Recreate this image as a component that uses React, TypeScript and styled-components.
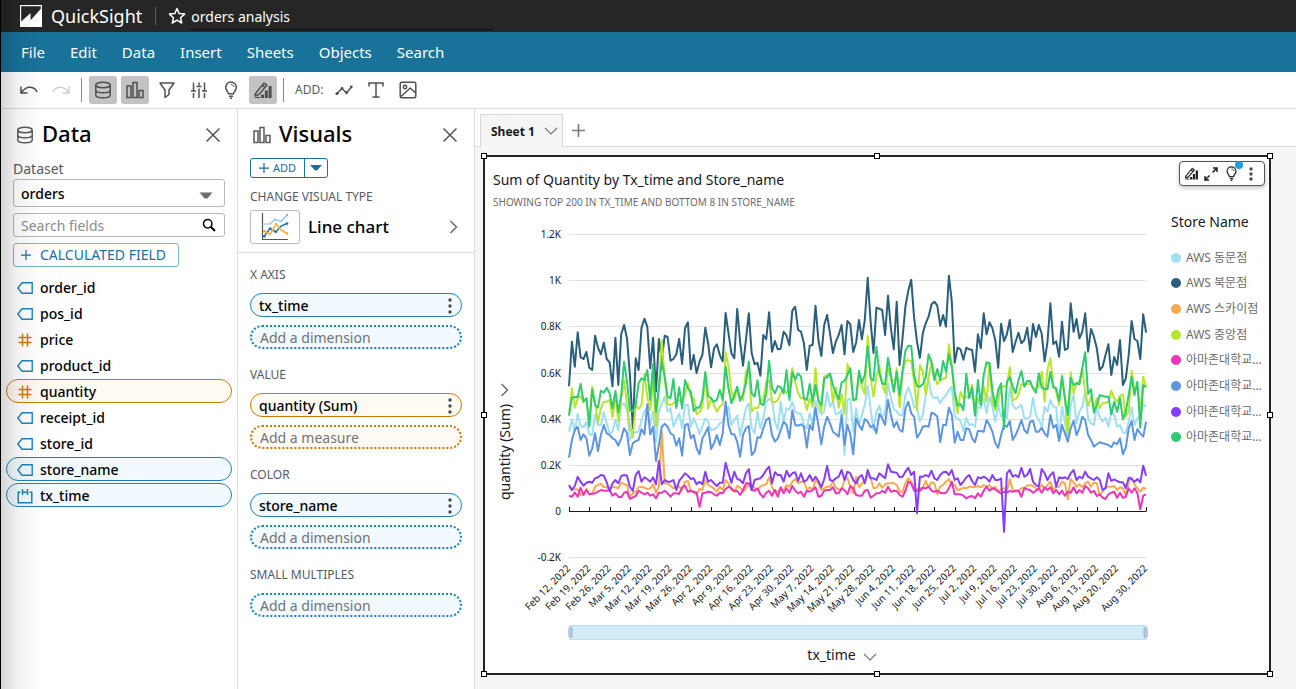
import React from "react";
import styled, { createGlobalStyle } from "styled-components";

const FONT = '"Noto Sans", "Noto Sans CJK KR", sans-serif';
const BLUE = "#1f82bd";
const TEAL = "#187299";
const AMBER = "#cc7a0a";

const GlobalStyle = createGlobalStyle`
  *, *::before, *::after { box-sizing: border-box; }
  body { margin: 0; background: #f5f5f5; font-family: ${FONT}; color: #16191f; }
  #root { min-height: 100vh; display: flex; }
  button, input, select { font-family: inherit; margin: 0; }
  button { padding: 0; border: 0; background: none; color: inherit; cursor: pointer; }
  svg { display: block; flex: none; }
  h1, h2, h3, p, ul { margin: 0; padding: 0; font-weight: 400; }
  ul { list-style: none; }
`;

/* ---------- page frame ---------- */

const Page = styled.div`
  position: relative;
  flex: 1;
  min-width: 0;
  min-height: 100vh;
  display: flex;
  flex-direction: column;

  &::before {
    content: "";
    position: absolute;
    z-index: 5;
    top: 0;
    bottom: 0;
    left: 0;
    width: 44px;
    border-left: 1px solid #000;
    background: linear-gradient(to right, rgba(0, 0, 0, 0.16), rgba(0, 0, 0, 0.05) 40%, rgba(0, 0, 0, 0));
    pointer-events: none;
  }
`;

const TopBar = styled.header`
  height: 32px;
  display: flex;
  align-items: center;
  padding-left: 19px;
  background: #262626;
  color: #fff;
`;

const Brand = styled.a`
  display: flex;
  align-items: center;
  gap: 8px;
  color: inherit;
  text-decoration: none;
  font-size: 18px;
  line-height: 24px;
`;

const TopDivider = styled.span`
  width: 1px;
  height: 18px;
  margin: 0 12px 0 13px;
  background: #5c5c5c;
`;

const AnalysisName = styled.h1`
  width: 302px;
  margin-left: 5px;
  padding-top: 2px;
  border-bottom: 1px solid #111;
  font-size: 14px;
  line-height: 24px;
`;

const MenuBar = styled.nav`
  height: 40px;
  display: flex;
  align-items: center;
  gap: 25px;
  padding-left: 21px;
  background: ${TEAL};
`;

const MenuItem = styled.button`
  color: #fff;
  font-size: 15px;
  line-height: 20px;
`;

const Toolbar = styled.div`
  height: 37px;
  display: flex;
  align-items: center;
  gap: 4px;
  padding-left: 15px;
  border-bottom: 1px solid #dcdcdc;
  background: #fff;
  color: #545b64;
`;

const Tool = styled.button<{ $on?: boolean; $faint?: boolean }>`
  width: 28px;
  height: 28px;
  display: grid;
  place-items: center;
  border-radius: 3px;
  background: ${(p) => (p.$on ? "#c3c3c3" : "transparent")};
  color: ${(p) => (p.$faint ? "#cfcfcf" : "#505050")};
`;

const ToolDivider = styled.span`
  width: 1px;
  height: 24px;
  margin: 0 3px 0 2px;
  background: #8a8a8a;
`;

const ToolLabel = styled.span`
  margin: 0 3px 0 4px;
  font-size: 12px;
  line-height: 16px;
`;

const Body = styled.main`
  flex: 1;
  display: flex;
`;

const Panel = styled.section<{ $width: number }>`
  flex: none;
  width: ${(p) => p.$width}px;
  border-right: 1px solid #dcdcdc;
  background: #fff;
`;

const PanelHead = styled.div`
  height: 49px;
  display: flex;
  align-items: center;
  gap: 8px;
  padding: 2px 12px 0 3px;
  color: #5a5a5a;
`;

const PanelTitle = styled.h2`
  flex: 1;
  padding-bottom: 3px;
  color: #000;
  font-size: 22px;
  font-weight: 500;
  line-height: 28px;
`;

const IconButton = styled.button`
  width: 24px;
  height: 24px;
  display: grid;
  place-items: center;
  color: #545454;
`;

/* ---------- data panel ---------- */

const DataInner = styled.div`
  padding: 0 0 0 13px;
`;

const FieldLabel = styled.label`
  display: block;
  margin: 1px 0;
  color: #545b64;
  font-size: 14px;
  line-height: 19px;
`;

const ControlBox = styled.div<{ $height: number }>`
  position: relative;
  width: 212px;
  height: ${(p) => p.$height}px;
  margin-bottom: 6px;

  & > svg {
    position: absolute;
    right: 9px;
    top: 50%;
    transform: translateY(-50%);
    pointer-events: none;
  }
`;

const DatasetSelect = styled.select`
  width: 100%;
  height: 100%;
  padding: 0 24px 0 7px;
  border: 1px solid #b8b8b8;
  border-radius: 3px;
  appearance: none;
  background: #fff;
  color: #000;
  font-size: 14px;
  font-weight: 500;
`;

const SearchInput = styled.input`
  width: 100%;
  height: 100%;
  padding: 0 28px 0 7px;
  border: 1px solid #b8b8b8;
  border-radius: 3px;
  background: #fff;
  font-size: 14px;

  &::placeholder { color: #8c8c8c; opacity: 1; }
`;

const CalcButton = styled.button`
  width: 166px;
  height: 24px;
  display: flex;
  align-items: center;
  gap: 9px;
  padding-left: 7px;
  border: 1px solid #7fb3cb;
  border-radius: 3px;
  color: ${TEAL};
  font-size: 14px;
  line-height: 18px;
  white-space: nowrap;
`;

const FieldList = styled.ul`
  display: flex;
  flex-direction: column;
  gap: 2px;
  padding: 8px 5px 0 6px;
`;

type Tone = "blue" | "amber";

const FieldRow = styled.button<{ $tone?: Tone }>`
  width: 100%;
  height: 24px;
  display: flex;
  align-items: center;
  gap: 7px;
  padding: 2px 0 0 10px;
  border: 1px solid ${(p) => (p.$tone ? (p.$tone === "blue" ? BLUE : AMBER) : "transparent")};
  border-radius: 12px;
  background: ${(p) => (p.$tone ? (p.$tone === "blue" ? "#f2faff" : "#fffbf3") : "transparent")};
  color: #000;
  font-size: 14px;
  font-weight: 500;
  line-height: 20px;
  text-align: left;
`;

/* ---------- visuals panel ---------- */

const VisualsTop = styled.div`
  height: 144px;
  padding: 0 0 0 12px;
  border-bottom: 1px solid #dcdcdc;
`;

const SplitButton = styled.div`
  width: 78px;
  height: 20px;
  display: flex;
  border: 1px solid ${TEAL};
  border-radius: 3px;
  color: ${TEAL};
`;

const AddButton = styled.button`
  flex: 1;
  display: flex;
  align-items: center;
  justify-content: center;
  gap: 4px;
  font-size: 11px;
  line-height: 16px;
`;

const AddMore = styled.button`
  width: 23px;
  display: grid;
  place-items: center;
  border-left: 1px solid ${TEAL};
`;

const Caption = styled.h3`
  color: #545b64;
  font-size: 12px;
  line-height: 16px;
`;

const TypeCaption = styled(Caption)`
  margin: 11px 0 5px;
`;

const TypeRow = styled.button`
  width: 212px;
  display: flex;
  align-items: center;
  gap: 8px;
  padding-right: 4px;
`;

const TypeThumb = styled.span`
  width: 50px;
  height: 34px;
  display: grid;
  place-items: center;
  border: 1px solid #bbb;
  border-radius: 3px;
`;

const TypeName = styled.span`
  flex: 1;
  color: #000;
  font-size: 17px;
  font-weight: 500;
  line-height: 24px;
  text-align: left;
`;

const Wells = styled.div`
  display: flex;
  flex-direction: column;
  gap: 18px;
  padding: 14px 12px 24px 12px;
`;

const Well = styled.div`
  display: flex;
  flex-direction: column;
  gap: 8px;

  & > ${Caption} { margin-bottom: 2px; }
`;

const FilledWell = styled.button<{ $tone: Tone }>`
  height: 24px;
  display: flex;
  align-items: center;
  justify-content: space-between;
  padding: 1px 9px 0 8px;
  border: 1px solid ${(p) => (p.$tone === "blue" ? BLUE : AMBER)};
  border-radius: 12px;
  background: ${(p) => (p.$tone === "blue" ? "#f2faff" : "#fffbf3")};
  color: #000;
  font-size: 14px;
  font-weight: 500;
  line-height: 20px;
`;

const EmptyWell = styled.button<{ $tone: Tone }>`
  height: 24px;
  padding: 1px 8px 0;
  border: 2px dotted ${(p) => (p.$tone === "blue" ? BLUE : AMBER)};
  border-radius: 12px;
  background: ${(p) => (p.$tone === "blue" ? "#f2faff" : "#fffbf3")};
  color: #737373;
  font-size: 14px;
  line-height: 20px;
  text-align: left;
`;

/* ---------- sheet ---------- */

const SheetArea = styled.section`
  flex: 1;
  min-width: 0;
  background: #f5f5f5;
`;

const TabBar = styled.div`
  height: 38px;
  display: flex;
  align-items: flex-end;
  padding-left: 5px;
  background: #fff;
  box-shadow: inset 0 -1px 0 #dedede;
`;

const SheetTab = styled.button`
  height: 33px;
  display: flex;
  align-items: center;
  gap: 9px;
  padding: 0 4px 0 10px;
  border: 1px solid #d6d6d6;
  border-bottom: 0;
  background: #f5f5f5;
  font-size: 12px;
  font-weight: 700;
  color: #16191f;
`;

const NewTab = styled.button`
  width: 32px;
  height: 34px;
  display: grid;
  place-items: center;
  color: #7d7d7d;
`;

const Visual = styled.article`
  position: relative;
  margin: 8px 25px 14px 8px;
  display: flex;
  flex-direction: column;
  padding-bottom: 8px;
  border: 2px solid #232323;
  background: #fff;
`;

const VisualTitle = styled.h2`
  padding: 13px 0 0 8px;
  font-size: 14px;
  line-height: 20px;
`;

const VisualNote = styled.p`
  padding: 5px 0 0 8px;
  color: #6b6b6b;
  font-size: 10px;
  line-height: 14px;
`;

const ChartRow = styled.div`
  display: flex;
  align-items: flex-start;
  margin-top: 16px;
`;

const ValueAxis = styled.button`
  width: 33px;
  height: 420px;
  padding: 158px 0 0 6px;
  display: flex;
  flex-direction: column;
  align-items: center;
  gap: 7px;
`;

const VerticalText = styled.span`
  writing-mode: vertical-rl;
  transform: rotate(180deg);
  font-size: 14px;
  line-height: 18px;
`;

const Plot = styled.div`
  flex: 1;
  min-width: 0;

  & > svg { width: 100%; height: auto; }
`;

const TimeAxis = styled.button`
  display: flex;
  align-items: center;
  gap: 7px;
  margin: 0 auto;
  padding-right: 5px;
  font-size: 14px;
  line-height: 20px;

  & > svg { margin-top: 3px; }
`;

const Legend = styled.aside`
  width: 98px;
`;

const LegendTitle = styled.h3`
  margin: -13px 0 13px;
  font-size: 14px;
  line-height: 20px;
`;

const LegendList = styled.ul`
  height: 205px;
  display: grid;
  grid-auto-rows: 1fr;
`;

const LegendItem = styled.li`
  display: flex;
  align-items: center;
  gap: 5px;
  color: #6b6b6b;
  font-size: 12px;
  line-height: 20px;
  white-space: nowrap;
`;

const Dot = styled.span<{ $color: string }>`
  width: 10px;
  height: 10px;
  flex: none;
  border-radius: 50%;
  background: ${(p) => p.$color};
`;

const VisualTools = styled.div`
  position: absolute;
  top: 4px;
  right: 4px;
  height: 25px;
  width: 86px;
  display: flex;
  align-items: center;
  padding-left: 1px;
  border: 1px solid #555;
  border-radius: 4px;
  background: #fff;
  box-shadow: 0 2px 4px rgba(0, 0, 0, 0.25);
  color: #222;
`;

const VisualTool = styled.button`
  position: relative;
  width: 20px;
  height: 22px;
  display: grid;
  place-items: center;
`;

const Alert = styled.span`
  position: absolute;
  top: -2px;
  right: -2px;
  width: 8px;
  height: 8px;
  border-radius: 50%;
  background: #1f9ede;
`;

const Handle = styled.span<{ $x: string; $y: string }>`
  position: absolute;
  left: ${(p) => p.$x};
  top: ${(p) => p.$y};
  width: 6px;
  height: 6px;
  border: 1px solid #000;
  background: #fff;
  transform: translate(-50%, -50%);
`;

/* ---------- icons ---------- */

type IconProps = { size?: number };

const line = { fill: "none", stroke: "currentColor", strokeWidth: 1.5 } as const;

const LogoIcon = () => (
  <svg width="24" height="24" viewBox="0 0 24 24">
    <path d="M1 1h22v22H1z" fill="#fff" />
    <path d="M2.200 2.200h19.600v2.600L11.600 16.200V9L2.200 17.600z" fill="#262626" />
  </svg>
);

const StarIcon = () => (
  <svg width="18" height="18" viewBox="0 0 18 18">
    <path d="M9 1.500 11.200 6.600 16.600 7.100 12.500 10.700 13.700 16 9 13.200 4.300 16 5.500 10.700 1.400 7.100 6.800 6.600z" fill="none" stroke="#fff" strokeWidth="1.500" strokeLinejoin="round" />
  </svg>
);

const UndoIcon = () => (
  <svg width="20" height="14" viewBox="0 0 20 14" {...line}>
    <path d="M2.500 9.500C5 5.500 8.500 4 11.500 4.200 14.500 4.400 16.800 6 18 9M2 3.500V10h6.500" />
  </svg>
);

const RedoIcon = () => (
  <svg width="20" height="14" viewBox="0 0 20 14" {...line}>
    <path d="M17.500 9.500C15 5.500 11.500 4 8.500 4.200 5.500 4.400 3.200 6 2 9M18 3.500V10h-6.500" />
  </svg>
);

const DatabaseIcon = ({ size = 18 }: IconProps) => (
  <svg width={size} height={size} viewBox="0 0 18 18" {...line}>
    <ellipse cx="9" cy="4" rx="7.200" ry="2.800" />
    <path d="M1.800 4v10c0 1.600 3.200 2.800 7.200 2.800s7.200-1.200 7.200-2.800V4M1.800 9c0 1.600 3.200 2.800 7.200 2.800s7.200-1.200 7.200-2.800" />
  </svg>
);

const BarsIcon = () => (
  <svg width="18" height="18" viewBox="0 0 18 18" {...line}>
    <path d="M1 5h4v11.500H1zM7 1.500h4v15H7zM13 9.500h4v7h-4z" />
  </svg>
);

const FilterIcon = () => (
  <svg width="18" height="18" viewBox="0 0 18 18" {...line} strokeLinejoin="round">
    <path d="M2 2h14l-5 7v4.500L7 16.300V9z" />
  </svg>
);

const SlidersIcon = () => (
  <svg width="18" height="18" viewBox="0 0 18 18" {...line}>
    <path d="M3.500 1.500v8M1 10h5M3.500 12v5M9 1.500v3M6.500 5.500h5M9 7.500V17M14.500 1.500v8M12 10h5M14.500 12v5" />
  </svg>
);

const BulbIcon = ({ size = 18 }: IconProps) => (
  <svg width={size} height={size} viewBox="0 0 18 18" {...line}>
    <path d="M6.500 12.700C6.400 10.700 3.700 9.700 3.700 6.300a5.300 5.300 0 0 1 10.600 0c0 3.400-2.700 4.400-2.800 6.400zM7 15.200h4M8 17.200h2" />
    <path d="M9 3.500c1.600 0 2.700 1.100 2.800 2.500" strokeWidth="1" />
  </svg>
);

const EditChartIcon = ({ size = 20 }: IconProps) => (
  <svg width={size} height={size} viewBox="0 0 20 20">
    <path d="M2.500 13.500 11 3l2.800 2.200L6 14.500l-4 1.300zM9.200 5.200l2.800 2.200" fill="none" stroke="currentColor" strokeWidth="1.500" strokeLinejoin="round" />
    <path d="M8 14.500h3V18H8zM11.800 10.500h3V18h-3zM15.600 6h3v12h-3z" fill="currentColor" />
    <path d="M2 17.400h5" stroke="currentColor" strokeWidth="1.300" />
  </svg>
);

const TrendIcon = () => (
  <svg width="18" height="18" viewBox="0 0 18 18" {...line}>
    <path d="m2 12.500 5-5 4.500 4.500 5-6" />
    <g fill="currentColor" stroke="none">
      <circle cx="2" cy="12.500" r="1.600" />
      <circle cx="7" cy="7.500" r="1.400" />
      <circle cx="11.500" cy="11.700" r="1.400" />
      <circle cx="16.300" cy="5.800" r="1.400" />
    </g>
  </svg>
);

const TextIcon = () => (
  <svg width="18" height="18" viewBox="0 0 18 18" {...line}>
    <path d="M2 5.500V2h14v3.500M9 2v14M5.500 16h7" />
  </svg>
);

const ImageIcon = () => (
  <svg width="18" height="18" viewBox="0 0 18 18" {...line} strokeLinejoin="round">
    <rect x="1.200" y="1.200" width="15.600" height="15.600" rx="1.500" />
    <circle cx="6" cy="6" r="1.700" />
    <path d="M2 15.500 11.300 7l5.300 5" />
  </svg>
);

const CloseIcon = () => (
  <svg width="16" height="16" viewBox="0 0 16 16" {...line}>
    <path d="m1.500 1.500 13 13M14.500 1.500l-13 13" />
  </svg>
);

const PlusIcon = ({ size = 10 }: IconProps) => (
  <svg width={size} height={size} viewBox="0 0 12 12" {...line}>
    <path d="M6 0v12M0 6h12" />
  </svg>
);

const CaretIcon = () => (
  <svg width="12" height="6" viewBox="0 0 12 6">
    <path d="M0 0h12L7 5.500H5z" fill="currentColor" />
  </svg>
);

const SelectCaret = () => (
  <svg width="20" height="12" viewBox="0 0 20 12">
    <path d="M3.500 5.500h13L11.300 11.500H8.700z" fill="#6b6b6b" />
  </svg>
);

const SearchIcon = () => (
  <svg width="14" height="14" viewBox="0 0 14 14" fill="none" stroke="#000" strokeWidth="1.500">
    <circle cx="5.700" cy="5.700" r="4.200" />
    <path d="m8.800 8.800 4.200 4.200" strokeWidth="2" />
  </svg>
);

const ChevronDown = () => (
  <svg width="14" height="8" viewBox="0 0 14 8" fill="none" stroke="#777" strokeWidth="1.200">
    <path d="m1 1 6 6 6-6" />
  </svg>
);

const ChevronRight = () => (
  <svg width="9" height="14" viewBox="0 0 9 14" fill="none" stroke="#666" strokeWidth="1.400">
    <path d="m1.500 1 6 6-6 6" />
  </svg>
);

const MoreIcon = ({ gap = 6 }: { gap?: number }) => (
  <svg width="4" height={gap * 2 + 4} viewBox={`0 0 4 ${gap * 2 + 4}`} fill="#4a4a4a">
    <circle cx="2" cy="2" r="1.700" />
    <circle cx="2" cy={2 + gap} r="1.700" />
    <circle cx="2" cy={2 + gap * 2} r="1.700" />
  </svg>
);

const ExpandIcon = () => (
  <svg width="14" height="14" viewBox="0 0 14 14" {...line}>
    <path d="M8.500 5.500 13 1M9 1h4v4M5.500 8.500 1 13M1 9v4h4" />
  </svg>
);

const LineThumb = () => (
  <svg width="28" height="28" viewBox="0 0 28 28" fill="none" strokeWidth="1.200">
    <path d="M1.500 0v26.500H27" stroke="#555" />
    <path d="M3 11h6l5-4.500 6 2 6-6.500" stroke="#86bfe0" />
    <path d="m3 23.500 6-8 6 3.500 5-6 6-2.500" stroke="#1877ad" strokeWidth="1.500" />
    <path d="m3 18 6 3.500 6-10.500 5 6 6 3.500" stroke="#ffab30" strokeWidth="1.500" />
    <g fill="#1877ad"><circle cx="3.200" cy="23.300" r="1.400" /><circle cx="9" cy="15.500" r="1.200" /><circle cx="14.500" cy="18.700" r="1.200" /><circle cx="26" cy="10.500" r="1.300" /></g>
    <g fill="#ffab30"><circle cx="3.200" cy="18" r="1.300" /><circle cx="15" cy="11" r="1.300" /><circle cx="26" cy="20.500" r="1.300" /></g>
    <g fill="#86bfe0"><circle cx="14" cy="6.500" r="1.100" /><circle cx="26" cy="2" r="1.200" /></g>
  </svg>
);

const TagIcon = () => (
  <svg width="16" height="12" viewBox="0 0 16 12" fill="none" stroke={BLUE} strokeWidth="1.400">
    <path d="M.9 6 5 .8h10.200v10.400H5z" />
  </svg>
);

const HashIcon = () => (
  <svg width="16" height="14" viewBox="0 0 16 14" fill="none" stroke={AMBER} strokeWidth="1.500">
    <path d="M5.500.5v13M10.500.5v13M1.500 4.500h13M1.500 9.500h13" />
  </svg>
);

const CalendarIcon = () => (
  <svg width="16" height="15" viewBox="0 0 16 15" fill="none" stroke={BLUE} strokeWidth="1.500">
    <path d="M3.500 3.200H1.200v10.600h13.600V3.200h-2.300M5.500 0v6M10.500 0v6M5.500 3.200h5" />
  </svg>
);

/* ---------- chart ---------- */

type Series = { name: string; color: string; points: number[] };

// Daily points, Feb 12 to Aug 30. Each is a depth below the top of the plot
// in thirds of a drawing unit; 1.2K lies at 28 and zero at 858.
const SERIES: Series[] = [
  {
    name: "AWS 동문점",
    color: "#9fdff1",
    points: [620,583,620,567,603,607,590,628,630,568,600,600,562,595,625,620,585,615,540,535,555,645,625,622,620,585,560,545,600,560,650,560,535,515,560,550,605,585,565,610,540,540,605,580,600,628,603,580,590,615,613,608,595,590,560,545,600,585,572,632,590,550,535,610,625,560,610,580,530,522,525,590,614,530,590,550,555,530,560,565,566,600,610,565,600,525,555,568,560,502,545,530,568,565,555,690,525,520,620,550,600,570,540,482,550,615,560,542,580,560,475,520,550,560,570,570,510,487,510,545,550,588,570,510,460,510,520,516,535,520,510,495,485,575,580,588,618,578,600,598,605,545,550,520,565,515,545,590,540,575,560,580,487,540,552,547,540,580,580,575,518,570,585,605,545,560,525,545,547,645,545,590,645,540,510,595,560,545,500,580,595,600,545,575,590,578,605,560,570,605,600,622,625,590,547,600,580,570,540,543],
  },
  {
    name: "AWS 북문점",
    color: "#2a5f7b",
    points: [484,350,425,322,397,402,381,428,435,332,368,388,353,402,412,484,338,480,328,300,340,450,610,400,435,308,281,305,430,338,500,342,405,332,336,407,402,388,342,417,310,292,433,390,444,410,390,308,356,427,370,358,390,409,264,325,385,400,252,350,422,345,265,385,418,413,452,330,343,262,380,348,373,371,320,332,361,257,245,315,320,355,435,362,360,242,345,393,300,270,325,384,350,330,300,388,288,298,381,353,285,343,285,158,290,384,248,251,255,330,212,310,373,230,420,340,245,197,164,278,350,398,325,295,275,238,230,242,302,270,305,152,230,413,368,373,404,368,373,375,440,328,370,265,328,292,310,347,428,296,348,328,285,381,350,323,355,345,308,378,297,336,300,326,409,350,235,357,349,395,290,375,370,235,320,282,340,320,265,380,312,335,370,435,425,390,358,450,396,420,345,480,460,390,288,342,348,402,268,323],
  },
  {
    name: "AWS 스카이점",
    color: "#fba94f",
    points: [785,795,793,793,810,805,792,808,805,785,780,776,787,785,795,785,787,790,772,778,780,815,805,800,787,785,788,792,790,778,803,785,620,775,775,782,790,788,785,795,770,768,798,803,808,792,795,765,780,785,790,800,785,795,765,775,795,800,783,787,800,790,775,780,790,795,785,780,778,757,787,800,798,795,795,780,785,770,762,775,770,770,792,787,795,765,775,795,790,785,785,770,788,793,795,765,758,785,805,755,787,775,770,750,758,790,788,775,788,778,775,775,775,780,800,800,775,760,770,790,792,790,788,768,787,772,775,808,785,780,770,762,780,780,795,793,788,790,785,785,787,783,787,780,785,780,792,785,800,793,790,798,763,795,800,797,790,788,782,780,783,790,795,778,793,780,770,795,785,785,770,775,822,762,772,785,778,787,775,770,785,773,775,810,800,785,785,785,783,795,787,790,812,770,757,778,790,800,788,792],
  },
  {
    name: "AWS 중앙점",
    color: "#b8e62e",
    points: [565,490,548,520,514,530,520,590,485,535,592,550,530,530,525,577,510,590,520,465,540,600,637,540,552,540,447,515,555,470,605,480,345,460,538,540,535,530,525,530,508,475,515,520,568,562,545,450,552,518,540,560,545,538,382,425,500,525,488,520,525,440,432,560,548,550,530,525,470,465,530,532,525,505,490,505,485,430,470,505,520,520,555,520,545,430,530,560,455,450,450,530,487,548,508,568,417,440,525,525,447,485,508,332,460,515,455,422,475,505,430,460,500,430,547,440,408,406,408,470,556,420,440,508,455,415,450,478,465,462,458,358,420,520,565,500,520,515,515,480,565,520,540,485,530,415,530,556,530,482,485,480,427,525,523,510,478,480,478,475,490,490,485,440,530,435,400,480,500,540,450,520,628,442,505,475,468,430,500,543,515,550,520,550,535,533,530,497,520,530,513,508,575,560,438,495,485,560,455,487],
  },
  {
    name: "아마존대학교…",
    color: "#ec35bb",
    points: [812,815,803,815,788,810,795,808,806,805,800,795,797,797,795,812,805,815,817,803,800,822,817,813,797,803,808,803,812,808,820,803,803,797,805,815,805,805,807,787,782,800,797,800,803,845,805,803,800,802,808,812,803,805,792,785,790,798,798,810,795,775,775,795,797,790,808,817,803,797,812,795,815,787,805,790,803,783,797,805,800,815,797,800,795,787,815,812,797,795,795,787,805,805,790,795,808,783,790,810,812,812,797,795,818,812,805,805,798,803,785,800,797,798,810,815,797,770,775,797,797,797,788,790,785,797,800,797,803,805,803,790,770,808,808,808,812,820,815,813,820,805,815,797,785,797,790,793,800,805,800,802,798,800,797,797,815,790,793,795,803,797,790,803,787,795,787,805,795,808,797,812,800,803,787,805,795,803,783,790,803,797,813,808,818,822,808,803,800,818,803,818,815,790,803,790,805,853,812,808],
  },
  {
    name: "아마존대학교…",
    color: "#5e95e3",
    points: [698,645,615,605,645,628,640,692,670,625,678,630,600,625,630,640,645,662,640,610,625,690,655,648,645,613,628,538,628,605,708,660,605,596,605,625,630,662,640,692,600,597,640,630,670,688,640,625,607,672,655,630,660,625,530,600,628,628,650,695,630,610,603,690,680,637,638,610,585,578,630,650,640,615,590,600,640,556,600,602,598,605,668,600,615,548,600,658,605,575,595,620,627,635,570,660,600,628,688,580,600,615,582,590,607,600,625,567,580,600,525,570,607,590,615,620,550,530,565,575,638,625,605,603,605,563,566,575,652,600,600,548,570,653,620,645,645,610,613,640,652,618,618,620,585,600,620,655,668,630,600,605,588,645,630,610,585,615,625,590,587,620,620,608,625,635,570,608,600,648,600,625,650,610,587,630,610,575,585,630,645,665,658,652,655,657,660,667,652,658,640,688,667,610,588,645,612,625,635,590],
  },
  {
    name: "아마존대학교…",
    color: "#873dff",
    points: [780,795,783,755,770,782,773,770,773,760,757,750,752,772,798,775,765,775,753,750,752,785,798,750,738,770,757,763,770,757,778,708,778,765,770,770,765,795,767,757,745,752,762,760,778,770,778,740,770,765,775,783,773,773,713,745,773,740,762,765,775,745,732,795,765,762,760,750,735,725,775,742,750,750,770,737,755,745,742,768,745,770,765,750,768,755,768,787,762,723,765,768,760,755,735,765,740,745,765,775,757,750,775,735,760,760,765,745,752,760,718,740,742,743,757,755,740,728,750,740,865,755,755,750,755,737,760,765,750,742,740,750,735,765,760,780,770,757,750,768,780,757,760,755,760,770,750,765,765,760,920,745,735,755,750,757,728,755,750,732,770,780,785,732,745,765,750,742,785,757,760,757,762,745,735,765,755,760,740,755,760,765,757,765,795,790,745,768,763,768,772,772,790,758,762,770,762,772,722,752],
  },
  {
    name: "아마존대학교…",
    color: "#2fcb72",
    points: [572,518,516,516,477,530,520,604,493,540,548,497,503,488,505,550,498,562,510,410,470,556,559,540,475,460,466,435,525,417,560,490,410,455,515,520,462,549,487,550,465,490,500,558,547,548,520,441,514,520,530,524,495,525,425,490,535,510,485,527,508,475,410,505,515,466,535,540,508,407,490,505,483,487,505,435,525,442,463,445,455,520,525,477,530,480,525,540,460,457,445,480,505,523,472,468,450,430,525,522,437,473,450,364,458,467,366,445,475,478,398,450,500,440,510,440,377,362,363,450,483,485,477,458,388,410,465,432,465,408,440,388,425,500,542,537,555,446,520,488,572,465,540,450,412,415,495,545,495,475,612,470,457,485,505,465,438,485,468,468,490,503,445,488,492,492,441,487,490,527,455,520,570,458,480,475,478,430,382,507,493,563,540,510,513,515,515,568,530,560,520,583,560,510,456,510,470,608,480,487],
  },
];

const PLOT_LEFT = 51;
const DAY = 2.9;
const LAST_DAY = 199;
const PLOT_RIGHT = PLOT_LEFT + DAY * LAST_DAY;
const dayX = (day: number) => PLOT_LEFT + day * DAY;

const VALUE_TICKS = ["1.2K", "1K", "0.8K", "0.6K", "0.4K", "0.2K", "0", "-0.2K"];
const DATE_TICKS = [
  "Feb 12", "Feb 19", "Feb 26", "Mar 5", "Mar 12", "Mar 19", "Mar 26", "Apr 2", "Apr 9", "Apr 16",
  "Apr 23", "Apr 30", "May 7", "May 14", "May 21", "May 28", "Jun 4", "Jun 11", "Jun 18", "Jun 25",
  "Jul 2", "Jul 9", "Jul 16", "Jul 23", "Jul 30", "Aug 6", "Aug 13", "Aug 20", "Aug 30",
].map((label, i) => ({ label: `${label}, 2022`, x: dayX(i === 28 ? LAST_DAY : i * 7) }));

const valueY = (i: number) => Math.round(9 + i * 46.2) + 0.5;

const LineChart = () => (
  <svg viewBox="0 0 653 420" role="img" aria-label="Sum of Quantity by Tx_time and Store_name" fontFamily={FONT} fill="#16191f">
    {VALUE_TICKS.map((label, i) => (
      <g key={label}>
        {label !== "0" && <path d={`M${PLOT_LEFT} ${valueY(i)}H${PLOT_RIGHT}`} stroke="#e1e1e1" />}
        <text x={PLOT_LEFT - 8} y={valueY(i) + 3} textAnchor="end" fontSize="10">{label}</text>
      </g>
    ))}
    <path d={`M${PLOT_LEFT} 286.500H${PLOT_RIGHT}`} stroke="#16191f" />
    {SERIES.map((s, i) => (
      <polyline
        key={i}
        points={s.points.map((p, day) => `${dayX(day).toFixed(1)},${(p / 3).toFixed(1)}`).join(" ")}
        fill="none"
        stroke={s.color}
        strokeWidth="2"
        strokeLinejoin="round"
      />
    ))}
    {DATE_TICKS.map((tick) => (
      <g key={tick.label}>
        <path d={`M${Math.round(tick.x) + 0.5} 282V286.500`} stroke="#16191f" />
        <text transform={`translate(${tick.x + 2} 344) rotate(-45)`} textAnchor="end" fontSize="10">{tick.label}</text>
      </g>
    ))}
    <rect x={PLOT_LEFT + 1} y="400.500" width={PLOT_RIGHT - PLOT_LEFT - 1} height="14" fill="#d3eaf7" stroke="#bcdcec" />
    {[PLOT_LEFT + 2, PLOT_RIGHT].map((x) => (
      <rect key={x} x={x - 2} y="402.500" width="3" height="10" rx="1.500" fill="#bccfe0" stroke="#93aec8" />
    ))}
  </svg>
);

/* ---------- content ---------- */

type FieldKind = "tag" | "hash" | "calendar";

const FIELDS: { name: string; kind: FieldKind; tone?: Tone }[] = [
  { name: "order_id", kind: "tag" },
  { name: "pos_id", kind: "tag" },
  { name: "price", kind: "hash" },
  { name: "product_id", kind: "tag" },
  { name: "quantity", kind: "hash", tone: "amber" },
  { name: "receipt_id", kind: "tag" },
  { name: "store_id", kind: "tag" },
  { name: "store_name", kind: "tag", tone: "blue" },
  { name: "tx_time", kind: "calendar", tone: "blue" },
];

const FIELD_ICONS = { tag: TagIcon, hash: HashIcon, calendar: CalendarIcon };

const WELLS: { title: string; value?: string; hint: string; tone: Tone }[] = [
  { title: "X AXIS", value: "tx_time", hint: "Add a dimension", tone: "blue" },
  { title: "VALUE", value: "quantity (Sum)", hint: "Add a measure", tone: "amber" },
  { title: "COLOR", value: "store_name", hint: "Add a dimension", tone: "blue" },
  { title: "SMALL MULTIPLES", hint: "Add a dimension", tone: "blue" },
];

const MENU = ["File", "Edit", "Data", "Insert", "Sheets", "Objects", "Search"];

const HANDLES = [
  ["-1px", "-1px"], ["50%", "-1px"], ["calc(100% + 1px)", "-1px"],
  ["-1px", "50%"], ["calc(100% + 1px)", "50%"],
  ["-1px", "calc(100% + 1px)"], ["50%", "calc(100% + 1px)"], ["calc(100% + 1px)", "calc(100% + 1px)"],
];

export default function App() {
  return (
    <Page>
      <GlobalStyle />
      <TopBar>
        <Brand href="#"><LogoIcon />QuickSight</Brand>
        <TopDivider />
        <button aria-label="Favorite"><StarIcon /></button>
        <AnalysisName>orders analysis</AnalysisName>
      </TopBar>
      <MenuBar>
        {MENU.map((m) => <MenuItem key={m}>{m}</MenuItem>)}
      </MenuBar>
      <Toolbar>
        <Tool aria-label="Undo"><UndoIcon /></Tool>
        <Tool aria-label="Redo" $faint><RedoIcon /></Tool>
        <ToolDivider />
        <Tool aria-label="Data" $on><DatabaseIcon /></Tool>
        <Tool aria-label="Visuals" $on><BarsIcon /></Tool>
        <Tool aria-label="Filter"><FilterIcon /></Tool>
        <Tool aria-label="Parameters"><SlidersIcon /></Tool>
        <Tool aria-label="Insights"><BulbIcon /></Tool>
        <Tool aria-label="Format visual" $on><EditChartIcon /></Tool>
        <ToolDivider />
        <ToolLabel>ADD:</ToolLabel>
        <Tool aria-label="Add visual"><TrendIcon /></Tool>
        <Tool aria-label="Add text"><TextIcon /></Tool>
        <Tool aria-label="Add image"><ImageIcon /></Tool>
      </Toolbar>
      <Body>
        <Panel $width={238}>
          <DataInner>
            <PanelHead>
              <DatabaseIcon />
              <PanelTitle>Data</PanelTitle>
              <IconButton aria-label="Close data"><CloseIcon /></IconButton>
            </PanelHead>
            <FieldLabel htmlFor="dataset">Dataset</FieldLabel>
            <ControlBox $height={28}>
              <DatasetSelect id="dataset" defaultValue="orders"><option>orders</option></DatasetSelect>
              <SelectCaret />
            </ControlBox>
            <ControlBox $height={24}>
              <SearchInput type="text" placeholder="Search fields" aria-label="Search fields" />
              <SearchIcon />
            </ControlBox>
            <CalcButton><PlusIcon />CALCULATED FIELD</CalcButton>
          </DataInner>
          <FieldList>
            {FIELDS.map((f) => {
              const Icon = FIELD_ICONS[f.kind];
              return (
                <li key={f.name}><FieldRow $tone={f.tone}><Icon />{f.name}</FieldRow></li>
              );
            })}
          </FieldList>
        </Panel>
        <Panel $width={237}>
          <VisualsTop>
            <PanelHead>
              <BarsIcon />
              <PanelTitle>Visuals</PanelTitle>
              <IconButton aria-label="Close visuals"><CloseIcon /></IconButton>
            </PanelHead>
            <SplitButton>
              <AddButton><PlusIcon />ADD</AddButton>
              <AddMore aria-label="More add options"><CaretIcon /></AddMore>
            </SplitButton>
            <TypeCaption>CHANGE VISUAL TYPE</TypeCaption>
            <TypeRow>
              <TypeThumb><LineThumb /></TypeThumb>
              <TypeName>Line chart</TypeName>
              <ChevronRight />
            </TypeRow>
          </VisualsTop>
          <Wells>
            {WELLS.map((w) => (
              <Well key={w.title}>
                <Caption>{w.title}</Caption>
                {w.value && <FilledWell $tone={w.tone}>{w.value}<MoreIcon /></FilledWell>}
                <EmptyWell $tone={w.tone}>{w.hint}</EmptyWell>
              </Well>
            ))}
          </Wells>
        </Panel>
        <SheetArea>
          <TabBar>
            <SheetTab>Sheet 1<ChevronDown /></SheetTab>
            <NewTab aria-label="Add sheet"><PlusIcon size={13} /></NewTab>
          </TabBar>
          <Visual>
            <VisualTitle>Sum of Quantity by Tx_time and Store_name</VisualTitle>
            <VisualNote>SHOWING TOP 200 IN TX_TIME AND BOTTOM 8 IN STORE_NAME</VisualNote>
            <ChartRow>
              <ValueAxis><ChevronRight /><VerticalText>quantity (Sum)</VerticalText></ValueAxis>
              <Plot>
                <LineChart />
                <TimeAxis>tx_time<ChevronDown /></TimeAxis>
              </Plot>
              <Legend>
                <LegendTitle>Store Name</LegendTitle>
                <LegendList>
                  {SERIES.map((s, i) => (
                    <LegendItem key={i}><Dot $color={s.color} />{s.name}</LegendItem>
                  ))}
                </LegendList>
              </Legend>
            </ChartRow>
            <VisualTools>
              <VisualTool aria-label="Format"><EditChartIcon size={15} /></VisualTool>
              <VisualTool aria-label="Expand"><ExpandIcon /></VisualTool>
              <VisualTool aria-label="Insights"><BulbIcon size={15} /><Alert /></VisualTool>
              <VisualTool aria-label="More"><MoreIcon gap={5} /></VisualTool>
            </VisualTools>
            {HANDLES.map(([x, y]) => <Handle key={x + y} $x={x} $y={y} />)}
          </Visual>
        </SheetArea>
      </Body>
    </Page>
  );
}
